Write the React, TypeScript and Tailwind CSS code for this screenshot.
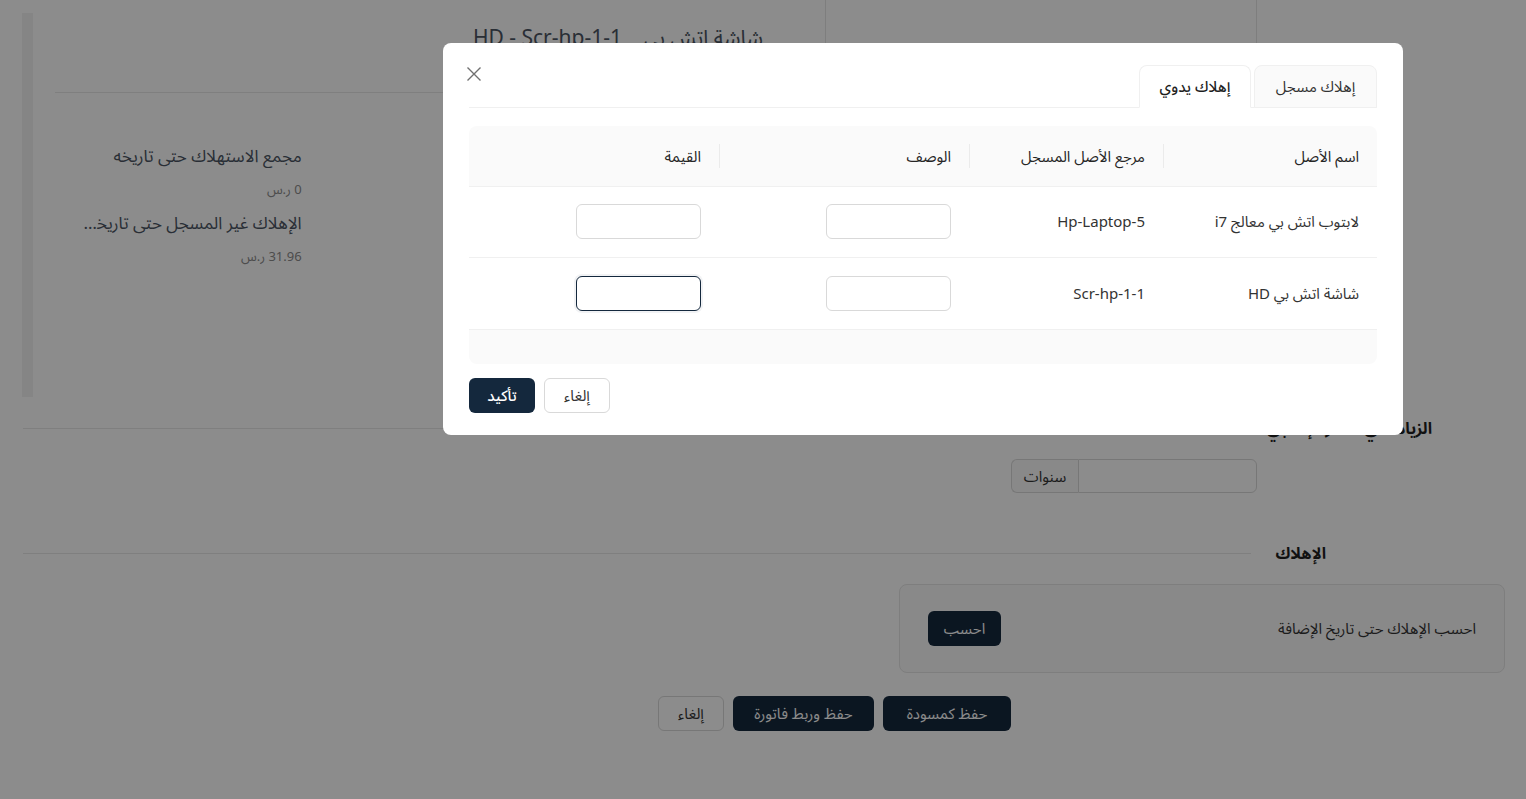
import React from "react";

const font = "font-['Noto_Sans','Noto_Sans_Arabic','DejaVu_Sans',sans-serif]";

const assets = [
  { name: "لابتوب اتش بي معالج i7", ref: "Hp-Laptop-5" },
  { name: "شاشة اتش بي HD", ref: "Scr-hp-1-1" },
];

function InfoItem({ label, value }: { label: string; value?: string }) {
  return (
    <div className="flex flex-col">
      <div className="h-[24px] truncate text-[17px] leading-[24px] text-[#4b5563]">{label}</div>
      {value && <div className="mt-[10px] h-[22px] text-[13px] leading-[22px] text-[#8c8c8c]">{value}</div>}
    </div>
  );
}

function SectionTitle({ title, offset }: { title: string; offset: string }) {
  return (
    <div className="flex h-[56px] items-center pl-[23px]">
      <div className={`${offset} whitespace-nowrap text-[16px] font-bold text-[#1f1f1f]`}>{title}</div>
      <div className="mr-[24px] h-px flex-1 bg-[#e8e8e8]" />
    </div>
  );
}

function Modal() {
  return (
    <div className="absolute left-[443px] top-[43px] w-[960px] rounded-lg bg-white px-[26px] pb-[22px] pt-[22px]">
      {/* close */}
      <button className="absolute left-[20px] top-[20px] flex h-[22px] w-[22px] items-center justify-center text-[#707070]">
        <svg width="16" height="16" viewBox="0 0 16 16" fill="none" stroke="currentColor" strokeWidth="1.4">
          <path d="M1.5 1.5l13 13M14.5 1.5l-13 13" />
        </svg>
      </button>

      {/* tabs */}
      <div className="flex items-end gap-[3px] border-b border-[#f0f0f0]">
        <div className="-mb-px flex h-[43px] w-[123px] items-center justify-center rounded-t-lg border border-[#f0f0f0] bg-[#fafafa] text-[15px] text-[#333]">
          إهلاك مسجل
        </div>
        <div className="-mb-px flex h-[43px] w-[112px] items-center justify-center rounded-t-lg border border-[#f0f0f0] border-b-white bg-white text-[15px] font-medium text-[#1f1f1f]">
          إهلاك يدوي
        </div>
      </div>

      {/* table */}
      <div className="mt-[18px] overflow-hidden rounded-lg">
        <table className="w-full table-fixed border-collapse text-[15px] text-[#333]">
          <colgroup>
            <col className="w-[214px]" />
            <col className="w-[194px]" />
            <col className="w-[250px]" />
            <col className="w-[250px]" />
          </colgroup>
          <thead>
            <tr className="h-[60px] bg-[#fafafa] text-[15px] text-[#262626]">
              {["اسم الأصل", "مرجع الأصل المسجل", "الوصف", "القيمة"].map((h, i) => (
                <th key={h} className="relative px-[18px] text-right font-normal">
                  {h}
                  {i < 3 && <span className="absolute left-0 top-1/2 h-[24px] w-px -translate-y-1/2 bg-[#ebebeb]" />}
                </th>
              ))}
            </tr>
          </thead>
          <tbody>
            {assets.map((a, i) => (
              <tr key={a.ref} className={i === 0 ? "h-[71px] border-t border-[#f0f0f0]" : "h-[72px] border-t border-[#f0f0f0]"}>
                <td className="px-[18px]">{a.name}</td>
                <td className="px-[18px]">{a.ref}</td>
                <td className="px-[18px]">
                  <input className="h-[35px] w-[125px] rounded-md border border-[#d9d9d9] bg-white px-2 outline-none" />
                </td>
                <td className="px-[18px]">
                  <input
                    className={
                      i === 1
                        ? "h-[35px] w-[125px] rounded-md border border-[#14283d] bg-white px-2 shadow-[0_0_0_2px_rgba(20,40,61,0.06)] outline-none"
                        : "h-[35px] w-[125px] rounded-md border border-[#d9d9d9] bg-white px-2 outline-none"
                    }
                  />
                </td>
              </tr>
            ))}
            <tr className="h-[35px] border-t border-[#f0f0f0] bg-[#fafafa]">
              <td colSpan={4} />
            </tr>
          </tbody>
        </table>
      </div>

      {/* actions */}
      <div className="mt-[14px] flex justify-end gap-[9px]">
        <button className="h-[35px] w-[66px] rounded-md border border-[#d9d9d9] bg-white text-[15px] text-[#333]">إلغاء</button>
        <button className="h-[35px] w-[66px] rounded-md bg-[#14283d] text-[15px] font-medium text-white">تأكيد</button>
      </div>
    </div>
  );
}

export default function App() {
  return (
    <div dir="rtl" className={`relative h-[799px] w-full overflow-hidden bg-white ${font}`}>
      {/* top area */}
      <div className="flex h-[400px]">
        <div className="w-[269px]" />
        <div className="w-[432px] border-l border-r border-[#e5e5e5]" />
        <div className="flex flex-1">
          <div className="flex-1 pl-[22px] pr-[30px]">
            <div className="h-[93px] border-b border-[#e8e8e8] pr-[32px] pt-[22px] text-[21px] text-[#4b5563]">
              شاشة اتش بي&nbsp;&nbsp;&nbsp; HD - Scr-hp-1-1
            </div>
            <div className="mt-[51px] grid grid-cols-3">
              <div className="flex flex-col gap-[10px] pl-[28px]">
                <InfoItem label="اسم الأصل" value="شاشة اتش بي HD" />
                <InfoItem label="تاريخ الشراء" value="2024-01-10" />
              </div>
              <div className="flex flex-col gap-[10px] pl-[28px]">
                <InfoItem label="الرقم التسلسلي" value="9876543" />
                <InfoItem label="تاريخ الاستلام" value="2024-01-15" />
                <InfoItem label="القيمة الدفترية" />
              </div>
              <div className="flex flex-col gap-[11px] pl-[28px]">
                <InfoItem label="مجمع الاستهلاك حتى تاريخه" value="0 ر.س" />
                <InfoItem label="الإهلاك غير المسجل حتى تاريخه الحالي" value="31.96 ر.س" />
              </div>
            </div>
          </div>
          <div className="mt-[13px] h-[384px] w-[11px] bg-[#f3f3f3]" />
          <div className="w-[22px]" />
        </div>
      </div>

      {/* lower form */}
      <SectionTitle title="الزيادة في العمر الإنتاجي" offset="mr-[94px]" />
      <div className="mt-[3px] flex pr-[269px]">
        <div className="flex h-[34px] w-[246px] text-[15px] text-[#333]">
          <input className="h-full w-[179px] rounded-r-md border border-[#d9d9d9] px-2 outline-none" />
          <div className="flex w-[67px] items-center justify-center rounded-l-md border border-r-0 border-[#d9d9d9] bg-[#fafafa]">
            سنوات
          </div>
        </div>
      </div>

      <div className="mt-[32px]">
        <SectionTitle title="الإهلاك" offset="mr-[200px]" />
      </div>
      <div className="mr-[21px] mt-[3px] flex h-[89px] w-[606px] items-center justify-between rounded-lg border border-[#e5e5e5] bg-[#fafafa] px-[28px]">
        <div className="text-[15px] text-[#333]">احسب الإهلاك حتى تاريخ الإضافة</div>
        <button className="h-[35px] w-[73px] rounded-md bg-[#14283d] text-[15px] text-white">احسب</button>
      </div>

      <div className="mt-[23px] flex gap-[9px] pr-[515px]">
        <button className="h-[35px] w-[128px] rounded-md bg-[#14283d] text-[15px] text-white">حفظ كمسودة</button>
        <button className="h-[35px] w-[141px] rounded-md bg-[#14283d] text-[15px] text-white">حفظ وربط فاتورة</button>
        <button className="h-[35px] w-[66px] rounded-md border border-[#d9d9d9] bg-white text-[15px] text-[#333]">إلغاء</button>
      </div>

      {/* backdrop + dialog */}
      <div className="absolute inset-0 bg-black/45" />
      <Modal />
    </div>
  );
}
